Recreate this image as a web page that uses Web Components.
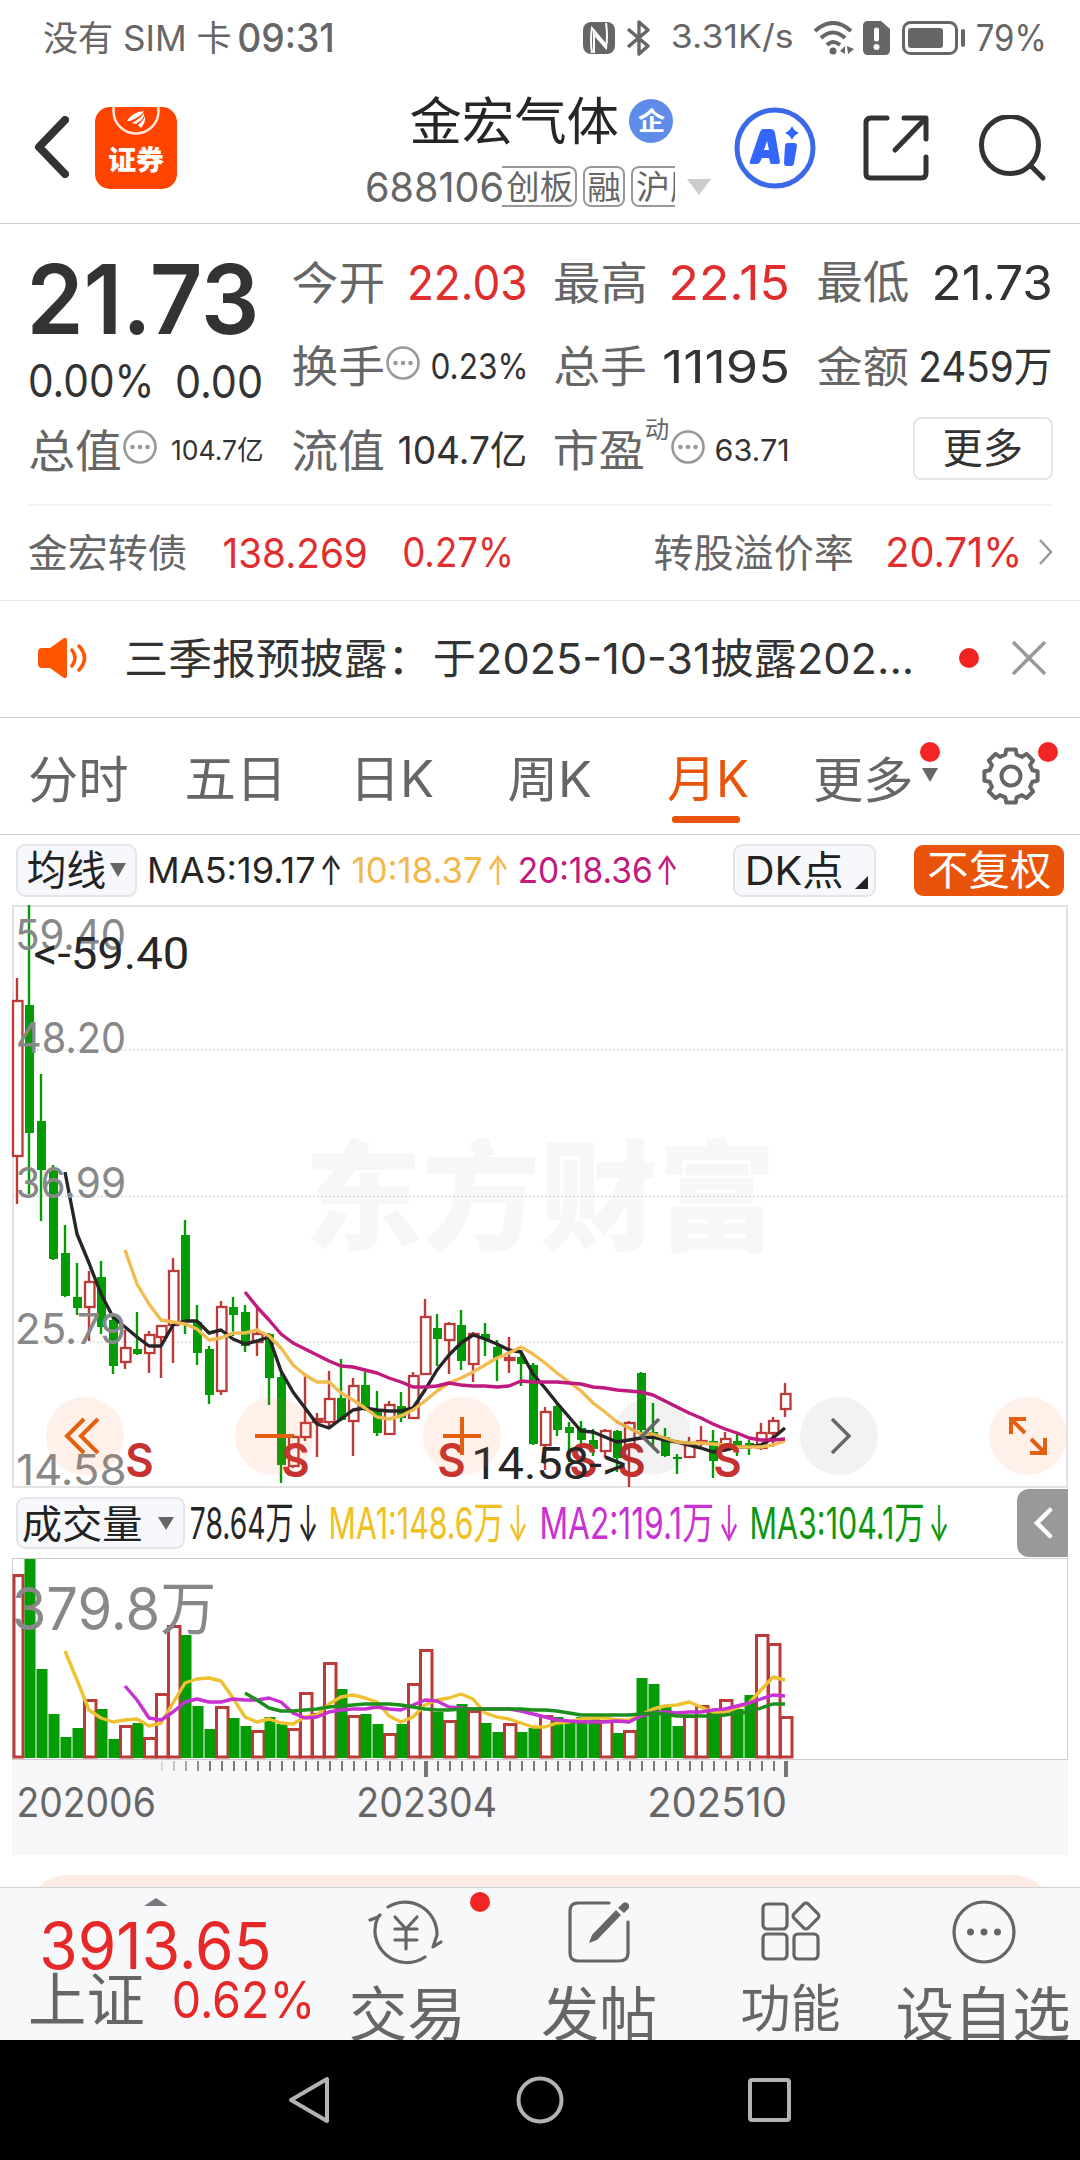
<!DOCTYPE html>
<html lang="zh-CN">
<head>
<meta charset="utf-8">
<title>金宏气体 688106</title>
<style>
  body {
    margin: 0;
    width: 1080px;
    background: #fff;
    color: #333;
    font-family: Inter, "Noto Sans CJK SC", sans-serif;
  }
</style>
</head>
<body>
<stock-page></stock-page>

<script>
const UP = "#bc3a38";
const DOWN = "#049c04";
const FIRST_X = 17;
const STEP = 12;

const pen = document.createElement("canvas").getContext("2d");

class BaseElement extends HTMLElement {
  constructor() {
    super();
    this.attachShadow({ mode: "open" });
  }
  connectedCallback() {
    this.shadowRoot.innerHTML = `<style>
      :host { display: flex; box-sizing: border-box; position: relative; align-items: center; }
      svg { display: block; flex: none; }
      fit-text { flex: none; }
      ${this.styles()}
    </style>${this.render()}`;
  }
  styles() { return ""; }
  render() { return "<slot></slot>"; }
}

// One line of text whose glyphs fill a box: w is the drawn width,
// h the drawn height, or cap the height of the figures.
class FitText extends HTMLElement {
  constructor() {
    super();
    this.attachShadow({ mode: "open" });
  }
  connectedCallback() {
    this.shadowRoot.innerHTML = `
      <style>
        :host { display: block; position: relative; }
        span { position: absolute; left: 0; top: 0; line-height: 1; white-space: pre; transform-origin: 0 0; }
        i { display: inline-block; width: 0; height: 0; }
      </style><span><i></i><slot></slot></span>`;
    const cs = getComputedStyle(this);
    pen.font = `${cs.fontWeight} 100px ${cs.fontFamily}`;
    const m = pen.measureText(this.textContent);
    const w = +this.getAttribute("w");
    const cap = this.getAttribute("cap");
    const h = +(cap || this.getAttribute("h"));
    const ascent = cap ? pen.measureText("5").actualBoundingBoxAscent : m.actualBoundingBoxAscent;
    const inkH = cap ? ascent : ascent + m.actualBoundingBoxDescent;
    const k = h / inkH;
    const sx = w / ((m.actualBoundingBoxLeft + m.actualBoundingBoxRight) * k);
    this.style.width = w + "px";
    this.style.height = h + "px";
    const span = this.shadowRoot.querySelector("span");
    span.style.fontSize = 100 * k + "px";
    const base = this.shadowRoot.querySelector("i").getBoundingClientRect().bottom - span.getBoundingClientRect().top;
    span.style.transform = `translate(${m.actualBoundingBoxLeft * k * sx}px, ${ascent * k - base}px) scaleX(${sx})`;
  }
}

class StatusBar extends BaseElement {
  styles() {
    return `
      :host { height: 72px; padding: 3px 37px 0 44px; color: #666; }
      .time { margin-left: 9px; font-weight: 500; }
      .nfc { margin-left: auto; }
      .bt { margin-left: 12px; }
      .speed { margin-left: 23px; }
      .wifi { margin-left: 22px; }
      .sim { margin-left: 9px; }
      .bat { margin-left: 12px; }
      .pct { margin-left: 12px; }
    `;
  }
  render() {
    return `
      <fit-text w="186" h="33">没有 SIM 卡</fit-text>
      <fit-text class="time" w="93" cap="29">09:31</fit-text>
      <svg class="nfc" width="32" height="32" viewBox="0 0 32 32"><rect width="32" height="32" rx="8" fill="#666"/><path d="M9 31Q7 18 9 6L23 23M23 1Q25 14 23 26L11 12V31" fill="none" stroke="#fff" stroke-width="2"/></svg>
      <svg class="bt" width="23" height="36" viewBox="0 0 23 36"><path d="M1 9L21 26L12 34V2L21 10L1 27" fill="none" stroke="#666" stroke-width="3.4" stroke-linejoin="round"/></svg>
      <fit-text class="speed" w="119" h="29">3.31K/s</fit-text>
      <svg class="wifi" width="40" height="34" viewBox="0 0 40 34"><g fill="none" stroke="#666" stroke-width="4"><path d="M1 10Q19 -6 37 10"/><path d="M7 17Q19 6 31 17"/><path d="M13 24Q19 18 26 24"/></g><circle cx="19" cy="30" r="3.5" fill="#666"/><path d="M26 30L31 25V33ZM33 25L40 28L34 33Z" fill="#666"/></svg>
      <svg class="sim" width="27" height="34" viewBox="0 0 27 34"><path d="M5 0H18L27 8V29Q27 34 22 34H5Q0 34 0 29V5Q0 0 5 0Z" fill="#666"/><path d="M13.500 9V18" stroke="#fff" stroke-width="5" stroke-linecap="round"/><circle cx="13.500" cy="26" r="3" fill="#fff"/></svg>
      <svg class="bat" width="63" height="34" viewBox="0 0 63 34"><rect x="1.500" y="1.500" width="53" height="31" rx="7" fill="none" stroke="#666" stroke-width="3"/><rect x="6" y="7" width="35" height="20" rx="3" fill="#666"/><path d="M61 10V24" stroke="#666" stroke-width="4" stroke-linecap="round"/></svg>
      <fit-text class="pct" w="66" h="28">79%</fit-text>
    `;
  }
}

class AppHeader extends BaseElement {
  styles() {
    return `
      :host { height: 152px; border-bottom: 1px solid #ccc; padding-left: 34px; align-items: flex-start; }
      .back { margin-top: 44px; }
      .logo { margin: 35px 0 0 26px; width: 82px; height: 82px; border-radius: 15px; background: #ff4400; color: #fff; font-weight: 900;
        display: flex; flex-direction: column; align-items: center; overflow: hidden; }
      .title { margin: 24px 0 0 190px; width: 345px; }
      .name { display: flex; align-items: center; padding-left: 44px; color: #262626; }
      .badge { width: 44px; height: 44px; border-radius: 50%; background: #5e8ce8; margin-left: 11px; display: grid; place-items: center; color: #fff; font-weight: 700; }
      .sub { display: flex; align-items: center; margin-top: 21px; color: #666; }
      .tags { display: flex; width: 173px; overflow: hidden; gap: 6px; color: #666; }
      .tag { box-sizing: border-box; flex: none; height: 41px; border: 2px solid #999; border-radius: 8px; display: flex; align-items: center; padding: 0 3px 0 4px; }
      .tag:first-child { border-left: 0; border-radius: 0 8px 8px 0; padding-left: 5px; }
      .tri { margin-left: 12px; }
      .ai { margin: 35px 0 0 22px; }
      .share { margin: 43px 0 0 47px; }
      .find { margin: 43px 0 0 50px; }
    `;
  }
  render() {
    return `
      <svg class="back" width="35" height="62" viewBox="0 0 35 62"><path d="M31 4L5 31L31 58" fill="none" stroke="#333" stroke-width="8" stroke-linecap="round" stroke-linejoin="round"/></svg>
      <div class="logo">
        <svg width="82" height="40" viewBox="0 0 82 40"><circle cx="41" cy="4" r="22.500" fill="none" stroke="#ffe9df" stroke-width="2.500"/><path d="M32 14Q37 5 49 4Q47 9 35 14ZM37 16Q46 11 49 6Q50 12 41 17ZM43 18Q49 13 50 9Q51 15 46 21Z" fill="#fff"/></svg>
        <fit-text w="55" h="26">证券</fit-text>
      </div>
      <div class="title">
        <div class="name">
          <fit-text w="207" h="49">金宏气体</fit-text>
          <div class="badge"><fit-text w="27" h="23">企</fit-text></div>
        </div>
        <div class="sub">
          <fit-text w="135" h="31">688106</fit-text>
          <div class="tags">
            <div class="tag"><fit-text w="65" h="31">创板</fit-text></div>
            <div class="tag"><fit-text w="31" h="30">融</fit-text></div>
            <div class="tag"><fit-text w="66" h="31">沪股</fit-text></div>
          </div>
          <svg class="tri" width="24" height="16"><path d="M0 0H24L12 16Z" fill="#ccc"/></svg>
        </div>
      </div>
      <svg class="ai" width="82" height="82" viewBox="0 0 82 82"><circle cx="41" cy="41" r="38" fill="none" stroke="#3c68ea" stroke-width="5"/><path d="M29 22H37Q40 22 41 26L46 55Q46 57 44 57H38Q36 57 36 55L35 51H28L26 55Q25 57 23 57H17Q15 57 16 54L26 25Q27 22 29 22ZM33 34L30 43H35Z" fill="#3366ff" fill-rule="evenodd"/><path d="M54 36H60Q63 36 63 39L60 56Q60 59 57 59H53Q50 59 50 56L51 39Q51 36 54 36ZM58 19Q60 24 65 26Q60 28 58 33Q56 28 51 26Q56 24 58 19Z" fill="#3366ff"/></svg>
      <svg class="share" width="66" height="66" viewBox="0 0 66 66"><path d="M24 3H8Q3 3 3 8V59Q3 63 8 63H58Q63 63 63 58V42M41 3H63V24M61 5L32 35" fill="none" stroke="#333" stroke-width="5" stroke-linecap="round" stroke-linejoin="round"/></svg>
      <svg class="find" width="68" height="68" viewBox="0 0 68 68"><circle cx="31" cy="30" r="28.500" fill="none" stroke="#333" stroke-width="5"/><path d="M52 51L64 63" stroke="#333" stroke-width="5" stroke-linecap="round"/></svg>
    `;
  }
}

class InfoDot extends BaseElement {
  styles() { return ":host { display: block; flex: none; }"; }
  render() {
    return `<svg width="34" height="34" viewBox="0 0 34 34"><circle cx="17" cy="17" r="15.500" fill="none" stroke="#999" stroke-width="2.600"/><g fill="#999"><circle cx="9.500" cy="17" r="2.300"/><circle cx="17" cy="17" r="2.300"/><circle cx="24.500" cy="17" r="2.300"/></g></svg>`;
  }
}

class QuoteCell extends BaseElement {
  styles() {
    return `
      :host { color: #333; }
      .label { display: flex; align-items: center; gap: 3px; color: #666; }
      .value { margin-left: auto; }
    `;
  }
  render() {
    return `<div class="label"><slot name="label"></slot></div><div class="value"><slot></slot></div>`;
  }
}

class QuotePanel extends BaseElement {
  styles() {
    return `
      :host { display: grid; height: 280px; padding: 16px 30px 28px; grid-template-columns: repeat(4, 232px); grid-auto-rows: 84px;
        justify-content: space-between; align-items: stretch; color: #333; }
      .main { grid-row: span 2; padding: 23px 0 0 2px; }
      .main > fit-text { font-weight: 600; }
      .change { display: flex; justify-content: space-between; margin: 29px 1px 0 -2px; }
      .red { color: #e02d2d; }
      info-dot { margin-top: -7px; }
      .dyn { align-self: flex-start; margin-top: -11px; }
      .more { justify-self: end; align-self: center; box-sizing: border-box; width: 140px; height: 63px; margin: -4px -3px 0 0; border: 2px solid #e5e5e5; border-radius: 8px; display: grid; place-items: center; }
    `;
  }
  render() {
    return `
      <div class="main">
        <fit-text w="223" h="72">21.73</fit-text>
        <div class="change"><fit-text w="120" h="34">0.00%</fit-text><fit-text w="84" h="34">0.00</fit-text></div>
      </div>
      <quote-cell><fit-text slot="label" w="90" h="43">今开</fit-text><fit-text class="red" w="115" h="36">22.03</fit-text></quote-cell>
      <quote-cell><fit-text slot="label" w="90" h="43">最高</fit-text><fit-text class="red" w="115" h="36">22.15</fit-text></quote-cell>
      <quote-cell><fit-text slot="label" w="90" h="43">最低</fit-text><fit-text w="115" h="36">21.73</fit-text></quote-cell>
      <quote-cell><fit-text slot="label" w="90" h="42">换手</fit-text><info-dot slot="label"></info-dot><fit-text w="93" h="27">0.23%</fit-text></quote-cell>
      <quote-cell><fit-text slot="label" w="90" h="42">总手</fit-text><fit-text w="123" h="34">11195</fit-text></quote-cell>
      <quote-cell><fit-text slot="label" w="90" h="42">金额</fit-text><fit-text w="129" cap="31">2459万</fit-text></quote-cell>
      <quote-cell><fit-text slot="label" w="90" h="43">总值</fit-text><info-dot slot="label"></info-dot><fit-text w="90" cap="20">104.7亿</fit-text></quote-cell>
      <quote-cell><fit-text slot="label" w="90" h="43">流值</fit-text><fit-text w="126" cap="28">104.7亿</fit-text></quote-cell>
      <quote-cell><fit-text slot="label" w="88" h="42">市盈</fit-text><fit-text class="dyn" slot="label" w="22" h="22">动</fit-text><info-dot slot="label"></info-dot><fit-text w="71" h="22">63.71</fit-text></quote-cell>
      <div class="more"><fit-text w="77" h="38">更多</fit-text></div>
    `;
  }
}

class BondRow extends BaseElement {
  styles() {
    return `
      :host { height: 96px; margin: 0 27px; padding: 0 0 2px 2px; border-top: 2px solid #f3f3f3; color: #e02d2d; }
      .grey { color: #666; }
    `;
  }
  render() {
    return `
      <fit-text class="grey" w="157" h="37">金宏转债</fit-text>
      <fit-text w="142" h="31" style="margin-left:38px">138.269</fit-text>
      <fit-text w="106" h="31" style="margin-left:38px">0.27%</fit-text>
      <fit-text class="grey" w="197" h="37" style="margin-left:auto">转股溢价率</fit-text>
      <fit-text w="130" h="31" style="margin:0 21px 0 36px">20.71%</fit-text>
      <svg width="14" height="26" viewBox="0 0 14 26"><path d="M1 1L12 13L1 25" fill="none" stroke="#999" stroke-width="2.500"/></svg>
    `;
  }
}

class NewsBar extends BaseElement {
  styles() {
    return `
      :host { height: 118px; padding: 0 34px 2px 38px; border-top: 1px solid #e6e6e6; border-bottom: 1px solid #ccc; color: #333; }
      .dot { width: 20px; height: 20px; border-radius: 50%; background: #f02222; margin: 0 33px 0 48px; }
    `;
  }
  render() {
    return `
      <svg width="50" height="40" viewBox="0 0 50 40"><path d="M4 10H12L26 0Q29 -1 29 3V37Q29 41 26 40L12 30H4Q0 30 0 26V14Q0 10 4 10Z" fill="#ff5500"/><path d="M34 12Q40 20 34 28M41 8Q52 20 41 32" fill="none" stroke="#ff5500" stroke-width="3.500" stroke-linecap="round"/></svg>
      <fit-text w="275" h="40" style="margin-left:39px">三季报预披露：</fit-text>
      <fit-text w="476" h="40" style="margin-left:33px">于2025-10-31披露202...</fit-text>
      <div class="dot"></div>
      <svg width="34" height="34" viewBox="0 0 34 34"><path d="M1 1L33 33M33 1L1 33" stroke="#999" stroke-width="3.500"/></svg>
    `;
  }
}

class PeriodTabs extends BaseElement {
  styles() {
    return `
      :host { height: 117px; padding-left: 30px; border-bottom: 1px solid #ccc; color: #666; }
      fit-text { margin-top: 6px; }
      .on { color: #e8540a; position: relative; }
      .on::after { content: ""; position: absolute; left: 4px; top: 65px; width: 68px; height: 7px; border-radius: 3px; background: #e8540a; }
      .more, .gear { position: relative; display: flex; align-items: center; }
      .more i, .gear i { position: absolute; width: 20px; height: 20px; border-radius: 50%; background: #f22525; }
      .more i { right: -2px; top: -8px; }
      .gear i { right: -18px; top: -5px; }
    `;
  }
  render() {
    const teeth = Array.from({ length: 8 }, (_, i) => {
      const pt = (r, d) => {
        const a = (i * 45 + d - 90) * Math.PI / 180;
        return `${(29 + r * Math.cos(a)).toFixed(1)} ${(29 + r * Math.sin(a)).toFixed(1)}`;
      };
      return `${i ? "L" : "M"}${pt(27, -10)}L${pt(27, 10)}L${pt(22, 15)}L${pt(22, 30)}`;
    }).join("");
    return `
      <fit-text w="97" h="46">分时</fit-text>
      <fit-text w="92" h="43" style="margin-left:60px">五日</fit-text>
      <fit-text w="75" h="43" style="margin-left:79px">日K</fit-text>
      <fit-text w="82" h="44" style="margin-left:76px">周K</fit-text>
      <div class="on" style="margin-left:77px"><fit-text w="80" h="44">月K</fit-text></div>
      <div class="more" style="margin-left:67px">
        <fit-text w="96" h="46">更多</fit-text>
        <svg width="16" height="14" style="margin:-2px 0 0 11px"><path d="M0 0H16L8 14Z" fill="#666"/></svg><i></i>
      </div>
      <div class="gear" style="margin-left:44px">
        <svg width="58" height="58" viewBox="0 0 58 58"><path d="${teeth}Z" fill="none" stroke="#666" stroke-width="4" stroke-linejoin="round"/><circle cx="29" cy="29" r="9.500" fill="none" stroke="#666" stroke-width="4"/></svg><i></i>
      </div>
    `;
  }
}

class ChipButton extends BaseElement {
  styles() {
    return `
      :host { flex: none; height: 53px; justify-content: center; border: 2px solid #e3e5ea; border-radius: 9px; background: #f7f8fb; color: #222; }
      :host([solid]) { border: 0; background: #e8540a; color: #fff; }
    `;
  }
}

class MaBar extends BaseElement {
  styles() {
    return `:host { height: 70px; padding: 0 16px; color: #262626; }`;
  }
  render() {
    return `
      <chip-button style="width:121px;gap:5px"><fit-text w="77" h="38">均线</fit-text><svg width="16" height="14"><path d="M0 0H16L8 14Z" fill="#666"/></svg></chip-button>
      <fit-text w="164" cap="26" style="margin-left:13px">MA5:19.17</fit-text><fit-text w="18" h="30" style="margin-left:8px">↑</fit-text>
      <fit-text w="128" cap="26" style="margin-left:13px;color:#f2b84c">10:18.37</fit-text><fit-text w="18" h="30" style="margin-left:8px;color:#f2b84c">↑</fit-text>
      <fit-text w="131" cap="26" style="margin-left:13px;color:#bf1a7d">20:18.36</fit-text><fit-text w="18" h="30" style="margin-left:7px;color:#bf1a7d">↑</fit-text>
      <chip-button style="width:143px;margin-left:auto;gap:13px;padding-left:7px"><fit-text w="94" h="37">DK点</fit-text><svg width="13" height="13" style="margin-top:24px"><path d="M13 0V13H0Z" fill="#222"/></svg></chip-button>
      <chip-button solid style="width:150px;height:51px;margin-left:38px"><fit-text w="121" h="38">不复权</fit-text></chip-button>
    `;
  }
}

// rise(1)/fall(0), high, body top, body bottom, low
const CANDLES = [
  [1,978,1001,1156,1204],[0,905,1005,1133,1194],[0,1074,1121,1170,1221],[0,1165,1170,1259,1260],[0,1225,1253,1296,1297],
  [0,1263,1297,1308,1315],[1,1271,1282,1307,1341],[0,1261,1277,1327,1334],[0,1317,1320,1366,1374],[1,1330,1348,1362,1369],
  [0,1312,1349,1354,1355],[1,1331,1335,1353,1373],[1,1325,1326,1337,1378],[1,1258,1271,1325,1363],[0,1220,1235,1321,1334],
  [0,1305,1322,1353,1365],[0,1346,1349,1395,1404],[1,1301,1307,1391,1395],[0,1297,1307,1315,1336],[0,1305,1312,1346,1352],
  [1,1308,1334,1342,1356],[0,1333,1334,1378,1405],[0,1372,1377,1465,1483],[1,1434,1437,1466,1468],[1,1373,1423,1437,1441],
  [1,1413,1419,1422,1457],[1,1371,1399,1422,1427],[0,1359,1398,1420,1421],[1,1378,1386,1421,1456],[0,1372,1385,1408,1411],
  [0,1391,1409,1433,1436],[1,1401,1405,1434,1435],[0,1392,1406,1418,1422],[1,1372,1376,1418,1419],[1,1299,1317,1374,1375],
  [0,1314,1328,1339,1366],[1,1322,1324,1340,1374],[0,1310,1325,1361,1370],[1,1332,1334,1364,1382],[0,1323,1334,1339,1356],
  [0,1340,1347,1358,1381],[1,1337,1358,1360,1373],[0,1350,1357,1364,1386],[0,1363,1365,1444,1445],[1,1407,1412,1445,1470],
  [0,1403,1406,1430,1436],[0,1422,1427,1433,1462],[0,1421,1428,1440,1452],[0,1429,1440,1449,1456],[1,1429,1431,1451,1458],
  [0,1430,1431,1458,1472],[1,1421,1423,1446,1487],[0,1372,1373,1430,1437],[0,1403,1432,1436,1446],[0,1428,1437,1456,1457],
  [0,1454,1457,1458,1474],[1,1437,1445,1457,1458],[1,1426,1441,1442,1446],[0,1430,1441,1461,1478],[1,1432,1439,1447,1448],
  [0,1434,1441,1446,1456],[0,1440,1443,1445,1455],[1,1423,1433,1448,1450],[1,1417,1421,1433,1447],[1,1383,1394,1409,1417],
];
const VOLUMES = [
  1574,1559,1669,1714,1737,1728,1699,1709,1739,1725,1723,1737,1693,1625,1635,1706,1729,1706,1718,1726,1730,1717,
  1724,1728,1692,1713,1662,1689,1715,1714,1724,1733,1724,1683,1649,1712,1720,1704,1710,1723,1732,1723,1732,1728,
  1715,1717,1722,1717,1719,1720,1733,1730,1678,1684,1707,1726,1715,1705,1712,1699,1709,1695,1634,1643,1716,
];
// averages: index of the first point, colour, heights
const PRICE_MA = [
  [4, "#262626", [1172,1234,1263,1294,1317,1327,1337,1346,1346,1325,1321,1321,1333,1330,1339,1344,1341,1337,1371,1392,1408,1424,1428,1419,1410,1408,1410,1411,1411,1408,1390,1370,1355,1343,1335,1339,1344,1350,1352,1374,1388,1403,1417,1431,1432,1437,1442,1440,1438,1437,1440,1442,1445,1448,1452,1450,1447,1447,1445,1438,1428]],
  [9, "#f0bb50", [1250,1284,1304,1320,1322,1324,1329,1340,1338,1333,1333,1330,1336,1348,1365,1375,1382,1382,1393,1400,1408,1417,1419,1416,1410,1401,1391,1383,1378,1372,1365,1358,1353,1347,1354,1363,1373,1382,1391,1403,1412,1422,1428,1434,1434,1438,1442,1443,1443,1444,1445,1447,1447,1447,1445,1441]],
  [19, "#bf1a7d", [1292,1307,1320,1334,1343,1349,1355,1361,1366,1367,1370,1373,1378,1382,1387,1387,1386,1383,1385,1386,1386,1387,1386,1381,1382,1382,1382,1383,1384,1387,1388,1390,1391,1392,1395,1401,1407,1413,1418,1424,1429,1433,1438,1440,1440,1439]],
];
const VOLUME_MA = [
  [4, "#efc030", [1651,1680,1710,1718,1722,1720,1719,1726,1723,1703,1683,1679,1678,1681,1698,1717,1722,1719,1723,1724,1717,1715,1704,1697,1695,1698,1702,1716,1722,1717,1705,1700,1698,1694,1699,1713,1717,1719,1723,1727,1727,1723,1722,1719,1718,1718,1720,1720,1715,1709,1706,1705,1702,1707,1712,1712,1708,1703,1690,1677,1680]],
  [9, "#c832d2", [1686,1700,1718,1720,1712,1702,1699,1702,1702,1699,1700,1700,1698,1702,1713,1718,1717,1712,1710,1709,1709,1707,1709,1710,1705,1700,1701,1707,1708,1709,1709,1709,1709,1711,1714,1717,1720,1721,1722,1722,1722,1721,1722,1716,1713,1712,1713,1712,1712,1710,1709,1706,1703,1699,1695,1696]],
  [19, "#1c8f1c", [1693,1700,1708,1711,1711,1710,1709,1707,1706,1705,1704,1704,1704,1705,1707,1709,1710,1710,1709,1709,1709,1709,1709,1709,1710,1710,1711,1713,1715,1715,1715,1715,1715,1714,1713,1714,1716,1716,1716,1716,1715,1713,1712,1708,1704,1704]],
];

const averageLines = (list) => list.map(([first, color, ys]) =>
  `<polyline fill="none" stroke="${color}" stroke-width="3.4" stroke-linejoin="round" points="${ys.map((y, i) => `${FIRST_X + (first + i) * STEP},${y}`).join(" ")}"/>`
).join("");

class RoundButton extends BaseElement {
  styles() {
    return `
      :host { width: 78px; height: 78px; border-radius: 50%; justify-content: center; background: rgba(255, 110, 40, .1); }
      :host([plain]) { background: rgba(0, 0, 0, .05); }
      path { fill: none; stroke: #e2600f; stroke-width: 4; }
      :host([plain]) path { stroke: #666; stroke-width: 3.500; }
    `;
  }
  render() {
    return `<svg width="44" height="44" viewBox="0 0 44 44"><path d="${this.getAttribute("path")}"/></svg>`;
  }
}

class KlineChart extends BaseElement {
  styles() {
    return `
      :host { display: block; height: 583px; }
      .over { position: absolute; }
      .axis { color: #888; }
      .sell { color: #c5322f; font-weight: 600; }
      /* Inter joins "->" into one arrow glyph */
      .mark { color: #262626; font-family: Roboto, sans-serif; }
    `;
  }
  render() {
    const candles = CANDLES.map(([up, hi, top, bottom, lo], i) => {
      const x = FIRST_X + i * STEP;
      if (!up) return `<path d="M${x} ${hi}V${lo}" stroke="${DOWN}" stroke-width="2.4"/><rect x="${x - 4}" y="${top}" width="9" height="${Math.max(2, bottom - top)}" fill="${DOWN}"/>`;
      return `<path d="M${x} ${hi}V${top}M${x} ${bottom}V${lo}" stroke="${UP}" stroke-width="2.4"/><rect x="${x - 4}" y="${top}" width="9.500" height="${bottom - top}" fill="${bottom - top < 4 ? UP : "#fff"}" stroke="${UP}" stroke-width="2.3"/>`;
    }).join("");
    const grid = [1050, 1196.500, 1342].map((y) => `<path d="M13 ${y}H1066" stroke="#ccc" stroke-dasharray="2 2"/>`).join("");
    const axis = [["59.40", 918], ["48.20", 1021], ["36.99", 1166], ["25.79", 1312], ["14.58", 1453]]
      .map(([t, y]) => `<fit-text class="over axis" w="106" h="32" style="left:18px;top:${y - 905}px">${t}</fit-text>`).join("");
    const sells = [139, 295, 451, 583, 631, 727]
      .map((x) => `<fit-text class="over sell" w="25" h="35" style="left:${x - 12}px;top:537px">S</fit-text>`).join("");
    const buttons = [
      [85, "", "M21 5L4 22L21 39M35 5L18 22L35 39"],
      [274, "", "M3 22H41"],
      [462, "", "M3 22H41M22 3V41"],
      [652, "plain", "M29 5L12 22L29 39"],
      [839, "plain", "M15 5L32 22L15 39"],
      [1028, "", "M5 20V5H20M5 5L19 19M39 24V39H24M39 39L25 25"],
    ].map(([x, kind, path]) => `<round-button class="over" ${kind} path="${path}" style="left:${x - 39}px;top:492px"></round-button>`).join("");
    return `
      <svg width="1080" height="583" viewBox="0 905 1080 583">
        <text x="304" y="1241" font-size="119" font-weight="900" fill="#f7f7f7" textLength="472" lengthAdjust="spacingAndGlyphs">东方财富</text>
        ${grid}
        <rect x="13" y="906" width="1054" height="581" fill="none" stroke="#e2e2e2" stroke-width="2"/>
        ${candles}
        ${averageLines(PRICE_MA)}
      </svg>
      ${axis}${sells}
      <fit-text class="over mark" w="152" cap="32" style="left:35px;top:32px">&lt;-59.40</fit-text>
      <fit-text class="over mark" w="150" cap="32" style="left:475px;top:542px">14.58-&gt;</fit-text>
      ${buttons}
    `;
  }
}

class VolumeBar extends BaseElement {
  styles() {
    return `
      :host { height: 70px; padding: 0 12px 0 16px; color: #262626; }
      .fold { margin-left: auto; width: 51px; height: 68px; border-radius: 12px 0 0 12px; background: #999; display: grid; place-items: center; }
    `;
  }
  render() {
    return `
      <chip-button style="width:169px;height:52px;gap:17px;padding-right:4px"><fit-text w="118" h="37">成交量</fit-text><svg width="16" height="13"><path d="M0 0H16L8 13Z" fill="#666"/></svg></chip-button>
      <fit-text w="101" cap="32" style="margin-left:6px">78.64万</fit-text><fit-text w="16" h="37" style="margin-left:8px">↓</fit-text>
      <fit-text w="171" cap="32" style="margin-left:15px;color:#efc020">MA1:148.6万</fit-text><fit-text w="16" h="37" style="margin-left:8px;color:#efc020">↓</fit-text>
      <fit-text w="170" cap="32" style="margin-left:16px;color:#c832d2">MA2:119.1万</fit-text><fit-text w="16" h="37" style="margin-left:9px;color:#c832d2">↓</fit-text>
      <fit-text w="171" cap="32" style="margin-left:15px;color:#0f960f">MA3:104.1万</fit-text><fit-text w="16" h="37" style="margin-left:8px;color:#0f960f">↓</fit-text>
      <div class="fold"><svg width="20" height="32" viewBox="0 0 20 32"><path d="M17 3L4 16L17 29" fill="none" stroke="#fff" stroke-width="4.500" stroke-linecap="round"/></svg></div>
    `;
  }
}

class VolumeChart extends BaseElement {
  styles() {
    return `
      :host { display: block; height: 202px; }
      fit-text { position: absolute; left: 15px; top: 29px; color: #888; }
    `;
  }
  render() {
    const bars = VOLUMES.map((y, i) => {
      const x = FIRST_X + i * STEP + .5;
      return CANDLES[i][0]
        ? `<rect x="${i ? x - 5 : 14}" y="${y + 1.500}" width="${i ? 11.500 : 9}" height="${1757 - y - 1.500}" fill="#fff" stroke="${UP}" stroke-width="3"/>`
        : `<rect x="${x - 5}" y="${y}" width="11" height="${1758 - y}" fill="${DOWN}"/>`;
    }).join("");
    return `
      <svg width="1080" height="202" viewBox="0 1558 1080 202">
        <rect x="12.500" y="1558.500" width="1055" height="201" fill="none" stroke="#ccc"/>
        ${bars}
        ${averageLines(VOLUME_MA)}
      </svg>
      <fit-text w="198" cap="43">379.8万</fit-text>
    `;
  }
}

class TimeAxis extends BaseElement {
  styles() {
    return `
      :host { display: block; height: 95px; margin: 0 12px; background: #f7f7fa; color: #666; }
      .dates { display: flex; padding: 8px 0 0 7px; }
    `;
  }
  render() {
    let ticks = "";
    for (let i = 12; i < 65; i++) {
      const long = i === 34 || i === 64;
      ticks += `<path d="M${6 + i * STEP} 1V${long ? 17 : 11}" stroke="#777" stroke-width="${long ? 4 : 2}" opacity="${Math.min(1, (i - 11) / 5)}"/>`;
    }
    return `
      <svg width="1056" height="18">${ticks}</svg>
      <div class="dates">
        <fit-text w="135" h="31">202006</fit-text>
        <fit-text w="136" h="31" style="margin-left:205px">202304</fit-text>
        <fit-text w="135" h="31" style="margin-left:155px">202510</fit-text>
      </div>
    `;
  }
}

class PromoCard extends BaseElement {
  styles() {
    return `
      :host { display: block; height: 32px; padding: 20px 27px 0; overflow: hidden; }
      div { height: 80px; border-radius: 40px; background: #fdece3; }
    `;
  }
  render() { return "<div></div>"; }
}

class ToolItem extends BaseElement {
  styles() {
    return `:host { flex-direction: column; height: 152px; padding-top: 9px; flex: none; gap: 18px; color: #666; }`;
  }
}

class IndexBar extends BaseElement {
  styles() {
    return `
      :host { height: 153px; border-top: 1px solid #d0d3d6; background: #f7f8fa; align-items: flex-start; overflow: hidden; color: #e62828; }
      .index { width: 351px; padding-top: 10px; }
      .row { display: flex; align-items: center; padding: 3px 0 0 31px; }
      .tools path, .tools circle, .tools rect { fill: none; stroke: #666; stroke-width: 3.2; stroke-linecap: round; stroke-linejoin: round; }
      .tools .fill { fill: #666; stroke: none; }
      .tools { display: flex; }
      .dot { position: absolute; left: 470px; top: 4px; width: 20px; height: 20px; border-radius: 50%; background: #f22525; }
    `;
  }
  render() {
    return `
      <div class="index">
        <svg width="24" height="8" style="margin-left:144px"><path d="M12 0L24 8H0Z" fill="#77777c"/></svg>
        <fit-text w="225" h="49" style="margin:15px 0 0 43px">3913.65</fit-text>
        <div class="row"><fit-text w="112" h="52" style="color:#666">上证</fit-text><fit-text w="136" h="39" style="margin-left:31px">0.62%</fit-text></div>
      </div>
      <div class="tools">
        <tool-item style="width:109px">
          <svg width="76" height="70" viewBox="0 0 76 70"><path d="M20 10A32 32 0 0 1 69 38L65 50L73 45M57 60A32 32 0 0 1 10 20L2 23M10 20L12 18"/><path d="M27 20L38 32L49 20M27 32H49M27 43H49M38 32V52"/></svg>
          <fit-text w="109" h="56">交易</fit-text>
        </tool-item>
        <tool-item style="width:112px;margin-left:83px">
          <svg width="64" height="70" viewBox="0 0 64 70"><path d="M42 6H11Q3 6 3 14V56Q3 64 11 64H52Q61 64 61 56V25"/><path class="fill" d="M49 13L54 18L30 43L22 46L25 38ZM51 11L56 6Q60 4 62 8V11L57 16Z"/></svg>
          <fit-text w="112" h="56">发帖</fit-text>
        </tool-item>
        <tool-item style="width:97px;margin-left:87px;gap:17px">
          <svg width="62" height="70" viewBox="0 0 62 70"><rect x="3" y="7" width="24" height="25" rx="4"/><rect x="3" y="37" width="24" height="25" rx="4"/><rect x="34" y="37" width="24" height="25" rx="4"/><rect x="36" y="9" width="20" height="20" rx="3" transform="rotate(45 46 19)"/></svg>
          <fit-text w="97" h="48">功能</fit-text>
        </tool-item>
        <tool-item style="width:171px;margin-left:59px">
          <svg width="70" height="70" viewBox="0 0 70 70"><circle cx="35" cy="35" r="30"/><circle class="fill" cx="21.500" cy="35" r="3.500"/><circle class="fill" cx="35" cy="35" r="3.500"/><circle class="fill" cx="48.500" cy="35" r="3.500"/></svg>
          <fit-text w="171" h="56">设自选</fit-text>
        </tool-item>
      </div>
      <div class="dot"></div>
    `;
  }
}

class NavBar extends BaseElement {
  styles() {
    return `
      :host { height: 120px; background: #000; padding-left: 288px; }
      path, circle, rect { fill: none; stroke: #b3b3b3; stroke-width: 4; stroke-linejoin: round; }
    `;
  }
  render() {
    return `
      <svg width="42" height="48" viewBox="0 0 42 48"><path d="M3 24L39 3V45Z"/></svg>
      <svg width="48" height="48" viewBox="0 0 48 48" style="margin-left:186px"><circle cx="24" cy="24" r="21.500"/></svg>
      <svg width="44" height="44" viewBox="0 0 44 44" style="margin-left:184px"><rect x="2" y="2" width="39" height="40" rx="2"/></svg>
    `;
  }
}

class StockPage extends BaseElement {
  styles() {
    return `:host { flex-direction: column; align-items: stretch; width: 1080px; height: 2160px; overflow: hidden; }`;
  }
  render() {
    return `
      <status-bar></status-bar>
      <app-header></app-header>
      <quote-panel></quote-panel>
      <bond-row></bond-row>
      <news-bar></news-bar>
      <period-tabs></period-tabs>
      <ma-bar></ma-bar>
      <kline-chart></kline-chart>
      <volume-bar></volume-bar>
      <volume-chart></volume-chart>
      <time-axis></time-axis>
      <promo-card></promo-card>
      <index-bar></index-bar>
      <nav-bar></nav-bar>
    `;
  }
}

customElements.define("fit-text", FitText);
customElements.define("info-dot", InfoDot);
customElements.define("quote-cell", QuoteCell);
customElements.define("chip-button", ChipButton);
customElements.define("round-button", RoundButton);
customElements.define("tool-item", ToolItem);
customElements.define("status-bar", StatusBar);
customElements.define("app-header", AppHeader);
customElements.define("quote-panel", QuotePanel);
customElements.define("bond-row", BondRow);
customElements.define("news-bar", NewsBar);
customElements.define("period-tabs", PeriodTabs);
customElements.define("ma-bar", MaBar);
customElements.define("kline-chart", KlineChart);
customElements.define("volume-bar", VolumeBar);
customElements.define("volume-chart", VolumeChart);
customElements.define("time-axis", TimeAxis);
customElements.define("promo-card", PromoCard);
customElements.define("index-bar", IndexBar);
customElements.define("nav-bar", NavBar);
customElements.define("stock-page", StockPage);
</script>
</body>
</html>
